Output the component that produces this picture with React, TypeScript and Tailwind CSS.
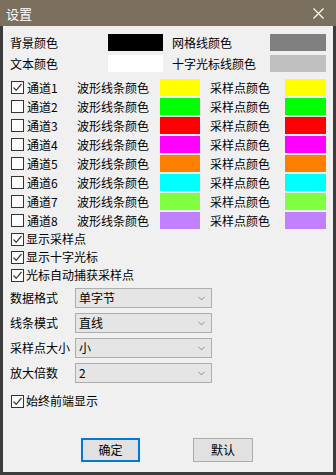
import { ChevronDown } from 'lucide-react';

const FONT = { fontFamily: '"Noto Sans CJK SC", "Noto Sans", sans-serif' };

const channels = [
  { wave: '#ffff00', sample: '#ffff00', checked: true },
  { wave: '#00ff00', sample: '#00ff00' },
  { wave: '#ff0000', sample: '#ff0000' },
  { wave: '#ff00ff', sample: '#ff00ff' },
  { wave: '#ff8000', sample: '#ff8000' },
  { wave: '#00ffff', sample: '#00ffff' },
  { wave: '#80ff40', sample: '#80ff40' },
  { wave: '#c080ff', sample: '#c080ff' },
];

function Check({ checked }: { checked?: boolean }) {
  return (
    <span className="w-[13px] h-[13px] shrink-0 border border-[#333] bg-white flex items-center justify-center">
      {checked && (
        <svg width="11" height="11" viewBox="0 0 11 11">
          <path d="M1.5 5.5 L4.2 8.3 L9.5 2" fill="none" stroke="#444" strokeWidth="1.3" />
        </svg>
      )}
    </span>
  );
}

function Select({ label, value }: { label: string; value: string }) {
  return (
    <div className="flex items-center h-[20px]">
      <span className="w-[65px] whitespace-nowrap">{label}</span>
      <div className="w-[137px] h-[20px] bg-[#e5e5e5] border border-[#adadad] flex items-center pl-[3px] pr-[4px]">
        <span className="flex-1">{value}</span>
        <ChevronDown size={11} strokeWidth={1.5} className="text-[#666]" />
      </div>
    </div>
  );
}

export default function App() {
  return (
    <div className="w-[336px] h-[475px] flex flex-col text-[12px] text-black leading-none" style={FONT}>
      <div className="h-[26px] bg-[#7b705e] flex items-center justify-between pl-[6px] pr-[12px] text-white">
        <span className="text-[13px]">设置</span>
        <svg width="11" height="11" viewBox="0 0 11 11">
          <path d="M0.5 0.5 L10.5 10.5 M10.5 0.5 L0.5 10.5" stroke="#fff" strokeWidth="1.2" />
        </svg>
      </div>
      <div className="flex-1 bg-[#f0f0f0] border-x-[3px] border-b-[3px] border-[#3c3c3c] pl-[7px] pt-[8px] flex flex-col">
        <div className="flex items-center h-[17px]">
          <span className="w-[98px]">背景颜色</span>
          <span className="w-[55px] h-[17px] bg-black" />
          <span className="w-[98px] ml-[9px]">网格线颜色</span>
          <span className="w-[56px] h-[17px] bg-[#808080]" />
        </div>
        <div className="flex items-center h-[17px] mt-[4px]">
          <span className="w-[98px]">文本颜色</span>
          <span className="w-[55px] h-[17px] bg-white" />
          <span className="w-[98px] ml-[9px]">十字光标线颜色</span>
          <span className="w-[56px] h-[17px] bg-[#c0c0c0]" />
        </div>
        <div className="flex flex-col mt-[6px]">
          {channels.map((c, i) => (
            <div key={i} className="flex items-center h-[19px]">
              <span className="ml-[1px]"><Check checked={c.checked} /></span>
              <span className="w-[50px] ml-[3px]">通道{i + 1}</span>
              <span className="w-[83px]">波形线条颜色</span>
              <span className="w-[40px] h-[17px]" style={{ background: c.wave }} />
              <span className="w-[75px] ml-[10px]">采样点颜色</span>
              <span className="w-[41px] h-[17px]" style={{ background: c.sample }} />
            </div>
          ))}
        </div>
        {['显示采样点', '显示十字光标', '光标自动捕获采样点'].map(t => (
          <div key={t} className="flex items-center h-[18px] gap-[2px]">
            <span className="ml-[1px]"><Check checked /></span>
            <span>{t}</span>
          </div>
        ))}
        <div className="flex flex-col gap-[5px] mt-[4px]">
          <Select label="数据格式" value="单字节" />
          <Select label="线条模式" value="直线" />
          <Select label="采样点大小" value="小" />
          <Select label="放大倍数" value="2" />
        </div>
        <div className="flex items-center h-[18px] gap-[2px] mt-[9px]">
          <span className="ml-[1px]"><Check checked /></span>
          <span>始终前端显示</span>
        </div>
        <div className="flex mt-[28px]">
          <button className="ml-[71px] w-[59px] h-[24px] bg-[#e1e1e1] border-2 border-[#0078d7] text-[12px]">确定</button>
          <button className="ml-[53px] w-[60px] h-[24px] bg-[#e1e1e1] border border-[#adadad] text-[12px]">默认</button>
        </div>
      </div>
    </div>
  );
}
